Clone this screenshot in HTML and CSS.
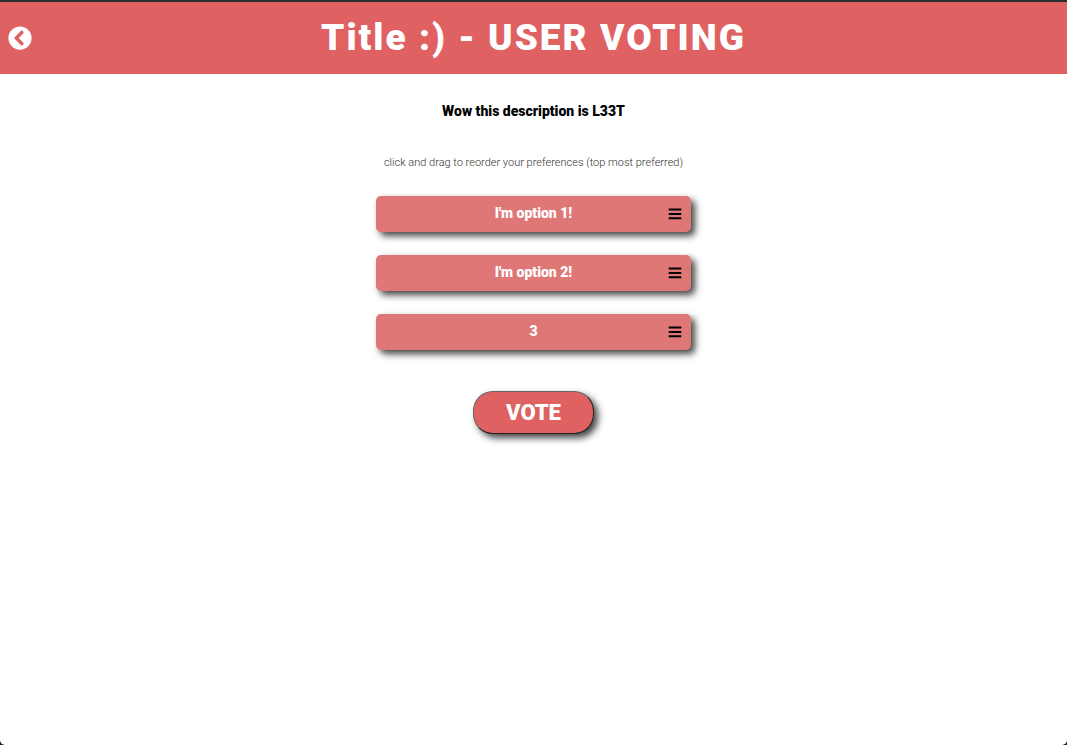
FILE: index.html
```html
<!DOCTYPE html>
<html lang="en">
<head>
<meta charset="utf-8">
<meta name="viewport" content="width=device-width, initial-scale=1">
<title>User Voting</title>
<link rel="stylesheet" href="styles.css">
</head>
<body>
<div class="page">
  <header class="header">
    <button class="back" type="button" aria-label="Back">
      <svg viewBox="0 0 512 512" aria-hidden="true"><path fill="currentColor" d="M256 504C119 504 8 393 8 256S119 8 256 8s248 111 248 248-111 248-248 248zM142.100 273l135.500 135.500c9.400 9.400 24.600 9.400 33.900 0l17-17c9.400-9.400 9.400-24.600 0-33.900L226.900 256l101.600-101.600c9.400-9.400 9.400-24.600 0-33.900l-17-17c-9.400-9.400-24.600-9.400-33.900 0L142.100 239c-9.400 9.400-9.400 24.600 0 34z"/></svg>
    </button>
    <h1 class="title">Title :) - USER VOTING</h1>
  </header>
  <main class="main">
    <h2 class="description">Wow this description is L33T</h2>
    <p class="hint">click and drag to reorder your preferences (top most preferred)</p>
    <ul class="options">
      <li class="option"><span class="label">I'm option 1!</span><svg class="grip" viewBox="0 0 14 12" aria-hidden="true"><path d="M.7 1.500h12.600M.7 5.900h12.600M.7 10.300h12.600"/></svg></li>
      <li class="option"><span class="label">I'm option 2!</span><svg class="grip" viewBox="0 0 14 12" aria-hidden="true"><path d="M.7 1.500h12.600M.7 5.900h12.600M.7 10.300h12.600"/></svg></li>
      <li class="option"><span class="label">3</span><svg class="grip" viewBox="0 0 14 12" aria-hidden="true"><path d="M.7 1.500h12.600M.7 5.900h12.600M.7 10.300h12.600"/></svg></li>
    </ul>
    <button class="vote" type="button">VOTE</button>
  </main>
</div>
</body>
</html>
```

FILE: styles.css
```css
* {
  box-sizing: border-box;
}

html {
  background: #1c1c1f;
}

body {
  margin: 0;
  font-family: Roboto, "Liberation Sans", sans-serif;
}

.page {
  min-height: 100vh;
  border-top: 2px solid #2c2b30;
  border-radius: 0 0 5px 5px;
  background: #fff;
}

.header {
  display: grid;
  grid-template-columns: 40px 1fr 40px;
  align-items: center;
  height: 72px;
  background: #df6161;
}

.back {
  display: flex;
  justify-content: center;
  padding: 0;
  border: 0;
  background: none;
  color: #fff;
  cursor: pointer;
}

.back svg {
  width: 24px;
  height: 24px;
}

.title {
  margin: 0;
  color: #fff;
  font-size: 37px;
  font-weight: 900;
  line-height: 72px;
  letter-spacing: 2px;
  text-align: center;
}

.main {
  display: flex;
  flex-direction: column;
  align-items: center;
  padding: 27px 16px;
}

.description {
  margin: 0;
  color: #000;
  font-size: 14px;
  font-weight: 900;
  line-height: 20px;
}

.hint {
  margin: 34px 0 25px;
  color: #333;
  font-size: 11px;
  font-weight: 300;
  line-height: 16px;
}

.options {
  display: grid;
  gap: 23px;
  width: 30%;
  min-width: 315px;
  margin: 0 0 41px;
  padding: 0;
  list-style: none;
}

.option {
  display: grid;
  grid-template-columns: 14px 1fr 14px;
  align-items: center;
  height: 36px;
  padding: 0 9px;
  border-radius: 5px;
  background: #e07777;
  box-shadow: 4px 4px 7px 0 #444;
  cursor: grab;
}

.label {
  grid-column: 2;
  padding-bottom: 2px;
  color: #fff;
  font-size: 14px;
  font-weight: 900;
  line-height: 20px;
  text-align: center;
}

.grip {
  width: 14px;
  height: 12px;
  fill: none;
  stroke: #000;
  stroke-width: 2;
}

.vote {
  height: 43px;
  padding: 0 32px;
  border: 1px solid;
  border-color: #666 #222 #222 #666;
  border-radius: 20px;
  background: #df6161;
  box-shadow: 4px 4px 7px 0 #444;
  color: #fff;
  font-family: inherit;
  font-size: 22px;
  font-weight: 900;
  cursor: pointer;
}
```
